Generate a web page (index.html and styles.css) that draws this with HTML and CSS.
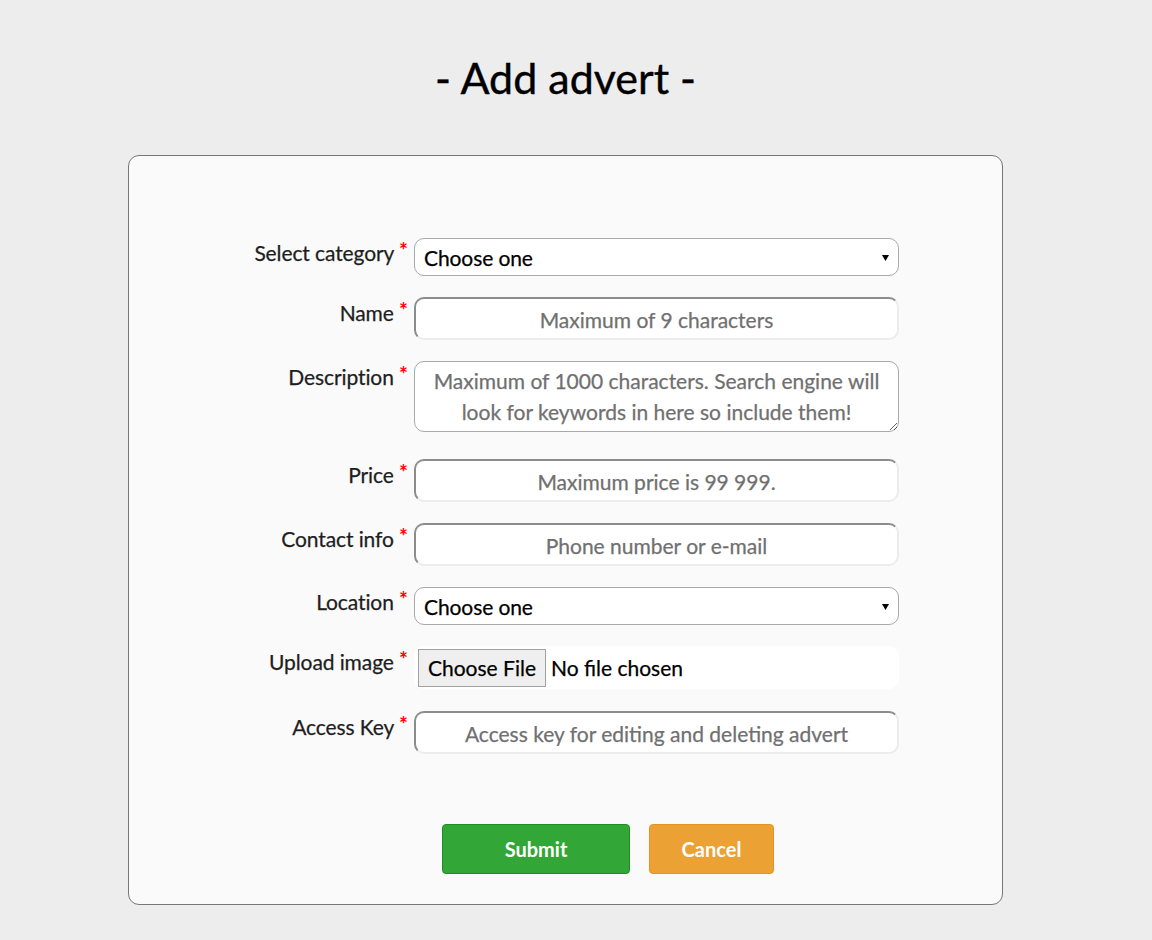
FILE: index.html
```html
<!DOCTYPE html>
<html lang="en">
<head>
<meta charset="utf-8">
<title>Add advert</title>
<link rel="stylesheet" href="styles.css">
</head>
<body>
<div class="page">
  <h1 class="title">- Add advert -</h1>
  <form class="card">
    <div class="grid">
      <label class="lbl lbl-sel">Select category <span class="req">*</span></label>
      <select class="sel"><option>Choose one</option></select>

      <label class="lbl">Name <span class="req">*</span></label>
      <input class="inp" type="text" placeholder="Maximum of 9 characters">

      <label class="lbl">Description <span class="req">*</span></label>
      <textarea class="txt" placeholder="Maximum of 1000 characters. Search engine will look for keywords in here so include them!"></textarea>

      <label class="lbl">Price <span class="req">*</span></label>
      <input class="inp" type="text" placeholder="Maximum price is 99 999.">

      <label class="lbl">Contact info <span class="req">*</span></label>
      <input class="inp" type="text" placeholder="Phone number or e-mail">

      <label class="lbl lbl-sel">Location <span class="req">*</span></label>
      <select class="sel"><option>Choose one</option></select>

      <label class="lbl">Upload image <span class="req">*</span></label>
      <div class="file"><span class="file-btn">Choose File</span><span class="file-txt">No file chosen</span></div>

      <label class="lbl">Access Key <span class="req">*</span></label>
      <input class="inp" type="text" placeholder="Access key for editing and deleting advert">
    </div>
    <div class="actions">
      <button type="button" class="btn btn-submit">Submit</button>
      <button type="button" class="btn btn-cancel">Cancel</button>
    </div>
  </form>
</div>
</body>
</html>
```

FILE: styles.css
```css
html, body {
  margin: 0;
  padding: 0;
  background: #ededed;
  font-family: Lato, "Open Sans", "Liberation Sans", sans-serif;
  color: #222;
}

.page {
  width: 1131px;
  height: 940px;
  overflow: hidden;
}

.title {
  margin: 52px 0 0;
  font-size: 43px;
  line-height: 52px;
  font-weight: 400;
  color: #000;
  text-align: center;
  -webkit-text-stroke: 0.4px #000;
}

.card {
  box-sizing: border-box;
  width: 875px;
  margin: 51px 0 0 128px;
  background: #fafafa;
  border: 1px solid #777;
  border-radius: 11px;
  padding: 82px 0 30px;
}

.grid {
  display: grid;
  grid-template-columns: 279px 485px;
  column-gap: 6px;
  align-items: start;
}

.lbl {
  font-size: 21px;
  line-height: 24px;
  text-align: right;
  padding-top: 1px;
  color: #1e1e1e;
  letter-spacing: -0.1px;
  -webkit-text-stroke: 0.25px #1e1e1e;
}
.lbl-sel { padding-top: 0; }

.req {
  color: #f00;
  font-size: 21px;
  font-weight: 700;
  vertical-align: 3px;
  letter-spacing: 0;
  -webkit-text-stroke: 0;
}

.sel, .inp, .txt, .file {
  box-sizing: border-box;
  width: 485px;
  font-family: Lato, "Open Sans", "Liberation Sans", sans-serif;
  font-size: 21px;
  background: #fff;
  margin: 0;
}

.sel {
  height: 38px;
  border: 1px solid #a9a9a9;
  border-radius: 10px;
  padding: 0 9px;
  color: #000;
  appearance: none;
  -webkit-appearance: none;
  background-image: url("data:image/svg+xml,%3Csvg xmlns='http://www.w3.org/2000/svg' width='8' height='8'%3E%3Cpath d='M0 1h8L4 8z' fill='%23000'/%3E%3C/svg%3E");
  background-repeat: no-repeat;
  background-position: right 9px center;
  background-size: 7px 7px;
  margin-bottom: 21px;
  letter-spacing: -0.1px;
  -webkit-text-stroke: 0.25px #000;
}

.inp {
  height: 43px;
  border-style: solid;
  border-width: 2px;
  border-color: #8c8c8c #ececec #ececec #8c8c8c;
  border-radius: 10px;
  text-align: center;
  padding: 2px 8px 0;
  color: #000;
  margin-bottom: 21px;
}

.inp::placeholder, .txt::placeholder {
  color: #707070;
  opacity: 1;
  -webkit-text-stroke: 0.25px #707070;
}

.txt {
  height: 71px;
  border: 1px solid #a9a9a9;
  border-radius: 10px;
  text-align: center;
  padding: 3px 10px;
  line-height: 31px;
  resize: vertical;
  display: block;
  margin-bottom: 27px;
}

.file {
  height: 43px;
  border-radius: 10px;
  display: flex;
  align-items: center;
  padding-left: 4px;
  margin-bottom: 22px;
}

.file-btn {
  box-sizing: border-box;
  height: 38px;
  width: 128px;
  justify-content: center;
  display: flex;
  align-items: center;
  background: #efefef;
  border: 1px solid #a0a0a0;
  color: #000;
  font-size: 21px;
  -webkit-text-stroke: 0.25px #000;
}

.file-txt {
  margin-left: 5px;
  color: #000;
  font-size: 21px;
  -webkit-text-stroke: 0.25px #000;
}

.actions {
  display: flex;
  gap: 19px;
  margin: 49px 0 0 313px;
}

.btn {
  height: 50px;
  border-radius: 4px;
  font-family: Lato, "Open Sans", "Liberation Sans", sans-serif;
  font-size: 20px;
  font-weight: 700;
  color: #fff;
  padding: 0;
  cursor: pointer;
}

.btn-submit {
  width: 188px;
  background: #32a636;
  border: 1px solid #1e8e22;
}

.btn-cancel {
  width: 125px;
  background: #eba134;
  border: 1px solid #e69421;
}
```
